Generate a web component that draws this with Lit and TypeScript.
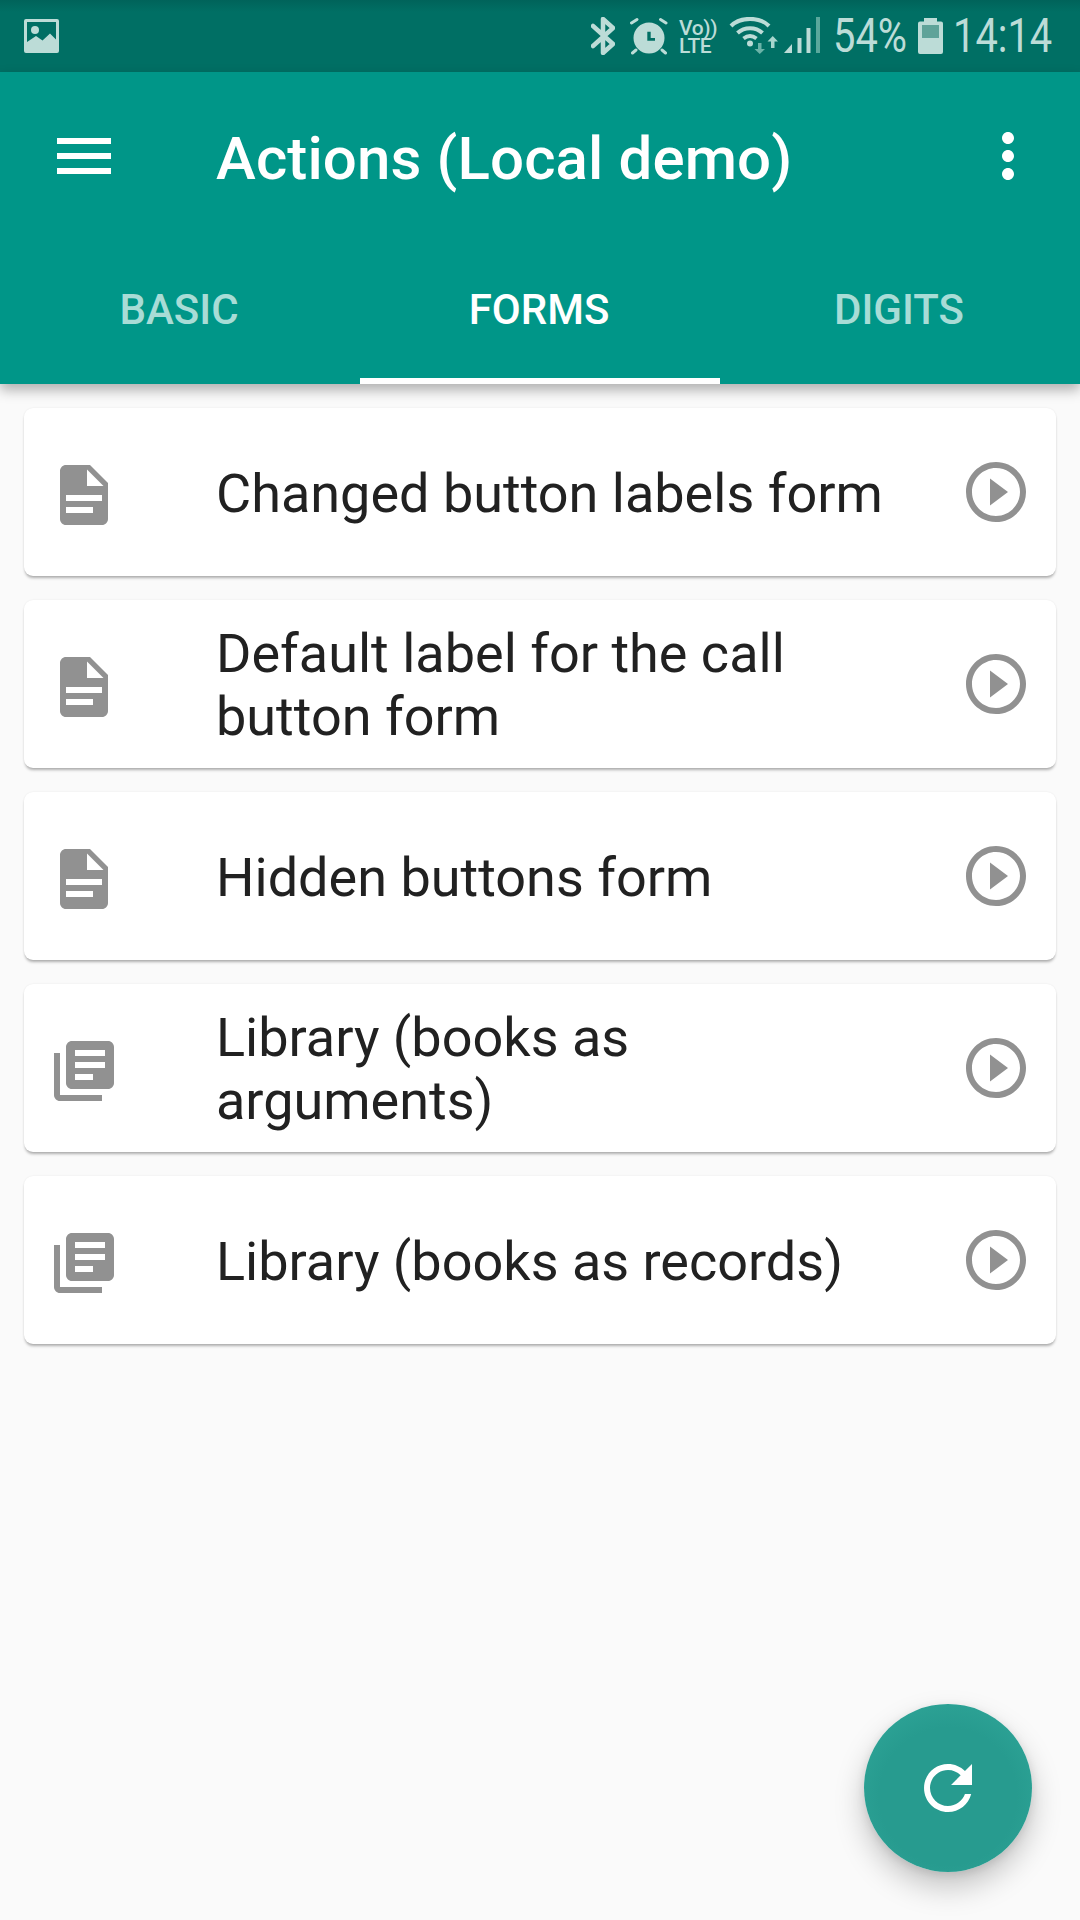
import { LitElement, html, css, svg } from 'lit';
import { customElement } from 'lit/decorators.js';

const DOC = svg`<path fill-rule="evenodd" d="M14 2H6c-1.1 0-2 .9-2 2v16c0 1.1.9 2 2 2h12c1.1 0 2-.9 2-2V8l-6-6zM6 12h12v2H6zM6 16h9v2H6zM13 3.5V9h5.5z"/>`;
const BOOKS = svg`<path d="M4 6H2v14c0 1.1.9 2 2 2h14v-2H4V6zm16-4H8c-1.1 0-2 .9-2 2v12c0 1.1.9 2 2 2h12c1.1 0 2-.9 2-2V4c0-1.1-.9-2-2-2zm-1 9H9V9h10v2zm-4 4H9v-2h6v2zm4-8H9V5h10v2z"/>`;
const PLAY = svg`<path d="M10 16.5l6-4.5-6-4.5v9zM12 2C6.48 2 2 6.48 2 12s4.48 10 10 10 10-4.48 10-10S17.52 2 12 2zm0 18c-4.41 0-8-3.59-8-8s3.59-8 8-8 8 3.59 8 8-3.59 8-8 8z"/>`;

const rows = [
  { icon: DOC, label: 'Changed button labels form' },
  { icon: DOC, label: 'Default label for the call button form' },
  { icon: DOC, label: 'Hidden buttons form' },
  { icon: BOOKS, label: 'Library (books as arguments)' },
  { icon: BOOKS, label: 'Library (books as records)' },
];

@customElement('app-root')
export class AppRoot extends LitElement {
  static styles = css`
    :host {
      display: block;
      position: relative;
      height: 1920px;
      background: #fafafa;
      font-family: Roboto, sans-serif;
      overflow: hidden;
    }

    .status {
      display: flex;
      align-items: center;
      height: 72px;
      background: linear-gradient(#00635a, #006f64 12px);
      color: #bcdcd7;
    }

    .status svg {
      display: block;
      flex: none;
      fill: currentColor;
    }

    .status .pic { margin-left: 24px; margin-top: -1px; }
    .status .bt { margin-left: auto; }
    .status .alarm { margin-left: 15px; }
    .status .wifi { margin-left: 13px; }
    .status .signal { margin-left: 4px; }
    .status .batt { margin-left: 13px; }

    .volte {
      margin-left: 11px;
      width: 36px;
      padding-top: 2px;
      font-size: 21px;
      font-weight: 500;
      line-height: 18px;
      letter-spacing: -0.4px;
      white-space: pre;
    }

    .narrow {
      font-size: 48px;
      line-height: 72px;
      transform: scaleX(0.83);
      transform-origin: left center;
      white-space: nowrap;
    }

    .pct { width: 72px; margin-left: 13px; }
    .time { width: 99px; margin-left: 10px; margin-right: 28px; }

    .bar {
      position: relative;
      background: #009688;
      box-shadow: 0 6px 12px rgba(0, 0, 0, 0.3);
      color: #fff;
    }

    .toolbar {
      display: flex;
      align-items: center;
      height: 168px;
      padding: 0 36px 0 48px;
    }

    .toolbar svg {
      display: block;
      width: 72px;
      height: 72px;
      fill: #fff;
      flex: none;
    }

    .title {
      flex: 1;
      margin-left: 96px;
      margin-top: 6px;
      font-size: 60px;
      font-weight: 500;
      line-height: 72px;
      letter-spacing: 0.12px;
    }

    .tabs {
      display: grid;
      grid-template-columns: repeat(3, 1fr);
      height: 144px;
    }

    .tab {
      display: flex;
      align-items: center;
      justify-content: center;
      padding: 0 2px 6px 0;
      box-sizing: border-box;
      font-size: 42px;
      font-weight: 500;
      color: #a8dcd6;
    }

    .tab.on {
      color: #fff;
      border-bottom: 6px solid #fff;
      padding-bottom: 0;
    }

    .list {
      display: flex;
      flex-direction: column;
      gap: 24px;
      padding: 24px;
    }

    .card {
      display: flex;
      align-items: center;
      height: 168px;
      padding: 0 24px;
      background: #fff;
      border-radius: 9px;
      box-shadow: 0 3px 3px -1px rgba(0, 0, 0, 0.3), 0 0 2px rgba(0, 0, 0, 0.08);
    }

    .card svg {
      display: block;
      width: 72px;
      height: 72px;
      fill: #919191;
      flex: none;
    }

    .card .lead {
      margin-top: 6px;
    }

    .label {
      flex: 1;
      margin-left: 96px;
      padding: 2px 60px 0 0;
      font-size: 54px;
      line-height: 63px;
      color: #212121;
    }

    .fab {
      position: absolute;
      left: 864px;
      top: 1704px;
      display: flex;
      align-items: center;
      justify-content: center;
      width: 168px;
      height: 168px;
      border-radius: 50%;
      background: radial-gradient(circle at 50% 55%, #279b8f 55%, #32a99b 100%);
      box-shadow: 0 15px 30px rgba(0, 0, 0, 0.22), 0 3px 10px rgba(0, 0, 0, 0.1);
    }

    .fab svg {
      width: 72px;
      height: 72px;
      fill: #fff;
    }
  `;

  renderStatus() {
    return html`
      <div class="status">
        <svg class="pic" width="35" height="34" viewBox="0 0 35 34">
          <path fill-rule="evenodd" d="M2 0h31a2 2 0 0 1 2 2v30a2 2 0 0 1-2 2H2a2 2 0 0 1-2-2V2a2 2 0 0 1 2-2zM3 3v20l9-6 6.500 4.500L26 14.500l6 6V3z"/>
          <circle cx="11" cy="11" r="4"/>
        </svg>
        <svg class="bt" width="24" height="38" viewBox="0 0 24 38">
          <path d="M2 9l20 18-10 9V2l10 9L2 29" fill="none" stroke="currentColor" stroke-width="4.500" stroke-linejoin="round" stroke-linecap="round"/>
        </svg>
        <svg class="alarm" width="38" height="38" viewBox="0 0 38 38">
          <path fill-rule="evenodd" d="M19 5.500a15.500 15.500 0 1 1 0 31 15.500 15.500 0 0 1 0-31zM17.300 14.700v9H25V21h-4.300v-6.300z"/>
          <g stroke="currentColor" stroke-width="3" stroke-linecap="round">
            <path d="M1.500 6L7 2.500M36 6l-5.500-3.500"/>
            <path d="M2.500 36L6 33M35.500 36L32 33"/>
          </g>
        </svg>
        <div class="volte">${'Vo))\nLTE'}</div>
        <svg class="wifi" width="52" height="38" viewBox="0 0 52 38">
          <g fill="none" stroke="currentColor" stroke-width="4">
            <path d="M3 9C12-.500 32-.500 41 9"/>
            <path d="M9.500 16c7-6.500 18-6.500 25 0"/>
            <path d="M15.500 21.500c4-3 9-3 13 0"/>
          </g>
          <circle cx="22" cy="26.500" r="3"/>
          <path fill="#6ab3a8" d="M30 26h3.500v6h3.500l-5.250 5-5.250-5H30z"/>
          <path fill="#a7d6ce" d="M43 31h3.500v-6.500h3.500l-5.250-5.500-5.250 5.500H43z"/>
        </svg>
        <svg class="signal" width="36" height="38" viewBox="0 0 36 38">
          <path d="M0 36l8-9v9z"/>
          <path d="M13.500 21h4v15h-4z"/>
          <path d="M22.500 11h4v25h-4z"/>
          <path fill="#5aa89c" d="M32 0h4v36h-4z"/>
        </svg>
        <div class="narrow pct">54%</div>
        <svg class="batt" width="25" height="36" viewBox="0 0 25 36">
          <path fill-rule="evenodd" d="M6 0h13v3.500h4a2 2 0 0 1 2 2V34a2 2 0 0 1-2 2H2a2 2 0 0 1-2-2V5.500a2 2 0 0 1 2-2h4zM4 7v12.500h17V7z"/>
          <path fill="#5fa399" d="M4 7h17v12.500H4z"/>
        </svg>
        <div class="narrow time">14:14</div>
      </div>
    `;
  }

  render() {
    return html`
      ${this.renderStatus()}
      <div class="bar">
        <div class="toolbar">
          <svg viewBox="0 0 24 24"><path d="M3 18h18v-2H3v2zm0-5h18v-2H3v2zm0-7v2h18V6H3z"/></svg>
          <div class="title">Actions (Local demo)</div>
          <svg viewBox="0 0 24 24"><path d="M12 8c1.100 0 2-.9 2-2s-.9-2-2-2-2 .9-2 2 .9 2 2 2zm0 2c-1.100 0-2 .9-2 2s.9 2 2 2 2-.9 2-2-.9-2-2-2zm0 6c-1.100 0-2 .9-2 2s.9 2 2 2 2-.9 2-2-.9-2-2-2z"/></svg>
        </div>
        <div class="tabs">
          <div class="tab">BASIC</div>
          <div class="tab on">FORMS</div>
          <div class="tab">DIGITS</div>
        </div>
      </div>
      <div class="list">
        ${rows.map(
          (r) => html`
            <div class="card">
              <svg class="lead" viewBox="0 0 24 24">${r.icon}</svg>
              <div class="label">${r.label}</div>
              <svg viewBox="0 0 24 24">${PLAY}</svg>
            </div>
          `
        )}
      </div>
      <div class="fab">
        <svg viewBox="0 0 24 24"><path d="M17.650 6.350C16.200 4.900 14.210 4 12 4c-4.420 0-7.990 3.580-7.990 8s3.570 8 7.990 8c3.730 0 6.840-2.550 7.730-6h-2.080c-.82 2.330-3.040 4-5.650 4-3.310 0-6-2.690-6-6s2.690-6 6-6c1.660 0 3.140.69 4.220 1.780L13 11h7V4l-2.350 2.350z"/></svg>
      </div>
    `;
  }
}
